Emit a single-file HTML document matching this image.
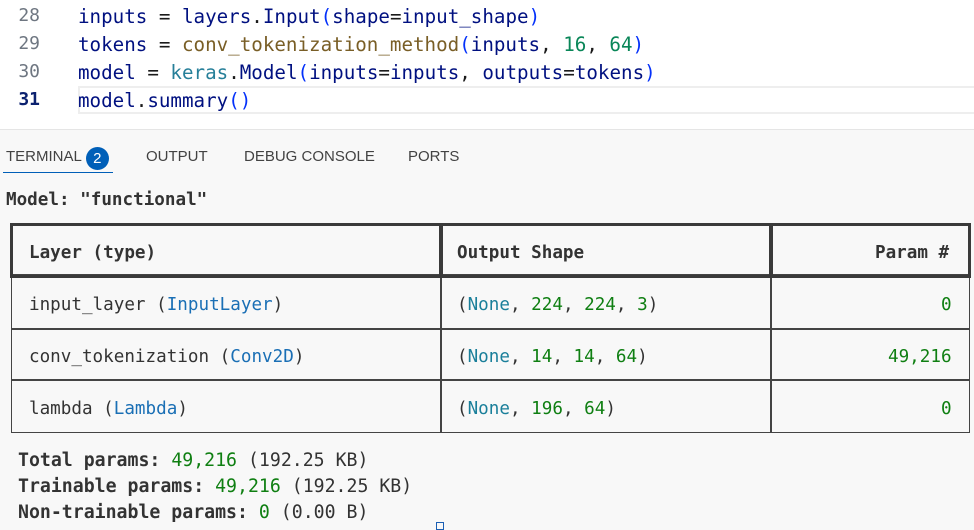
<!DOCTYPE html>
<html><head><meta charset="utf-8"><style>
*{margin:0;padding:0;box-sizing:border-box}
body{width:974px;height:528px;overflow:hidden;background:#f8f8f8;position:relative;font-family:"DejaVu Sans Mono","Liberation Mono",monospace}
.ed{position:absolute;left:0;top:0;width:974px;height:130px;background:#fff;border-bottom:1px solid #e5e5e5}
.ln{position:absolute;left:0;width:40px;text-align:right;font-size:18px;color:#6e7681}
.code{position:absolute;left:78px;font-size:19.2px;color:#1a1a1a;white-space:pre;letter-spacing:0}
.hl{position:absolute;left:78px;top:86px;right:0;height:28px;border:2px solid #eee;border-right:none}
.v{color:#001080}.f{color:#795e26}.t{color:#267f99}.n{color:#098658}.p{color:#0431fa}
.tab{position:absolute;top:148px;font-family:"Liberation Sans",sans-serif;font-size:15px;color:#424242}
.badge{display:inline-block;width:23px;height:23px;border-radius:50%;background:#005fb8;color:#fff;font-size:15px;text-align:center;line-height:23px;margin-left:4px;vertical-align:-2px}
.ul{position:absolute;left:3px;top:172px;width:110px;height:1px;background:#005fb8}
.txt{position:absolute;white-space:pre;font-size:17.6px;color:#333}
.tot{font-size:18.2px}
b{font-weight:bold}
.g{color:#0f7f12}.b{color:#1a6fb5}.c{color:#1a7f9a}
.cell{position:absolute;border:1.5px solid #444}
.hd{position:absolute;border:3.5px solid #3a3a3a}
</style></head><body>
<div class="ed">
<div class="hl"></div>
<div class="ln" style="top:5px">28</div>
<div class="ln" style="top:33px">29</div>
<div class="ln" style="top:61px">30</div>
<div class="ln" style="top:89px;color:#0b216f;font-weight:bold">31</div>
<div class="code" style="top:5px"><span class="v">inputs</span> = <span class="v">layers</span>.<span class="v">Input</span><span class="p">(</span><span class="v">shape</span>=<span class="v">input_shape</span><span class="p">)</span></div>
<div class="code" style="top:33px"><span class="v">tokens</span> = <span class="f">conv_tokenization_method</span><span class="p">(</span><span class="v">inputs</span>, <span class="n">16</span>, <span class="n">64</span><span class="p">)</span></div>
<div class="code" style="top:61px"><span class="v">model</span> = <span class="t">keras</span>.<span class="v">Model</span><span class="p">(</span><span class="v">inputs</span>=<span class="v">inputs</span>, <span class="v">outputs</span>=<span class="v">tokens</span><span class="p">)</span></div>
<div class="code" style="top:89px"><span class="v">model</span>.<span class="v">summary</span><span class="p">()</span></div>
</div>
<div class="tab" style="left:6px;top:147px">TERMINAL<span class="badge">2</span></div>
<div class="tab" style="left:146px">OUTPUT</div>
<div class="tab" style="left:244px">DEBUG CONSOLE</div>
<div class="tab" style="left:408px">PORTS</div>
<div class="ul"></div>
<div class="txt" style="left:6px;top:190px"><b>Model: "functional"</b></div>

<div class="cell" style="left:11px;top:274px;width:431px;height:56px"></div>
<div class="cell" style="left:440px;top:274px;width:332px;height:56px"></div>
<div class="cell" style="left:770px;top:274px;width:200px;height:56px"></div>
<div class="cell" style="left:11px;top:328px;width:431px;height:53px"></div>
<div class="cell" style="left:440px;top:328px;width:332px;height:53px"></div>
<div class="cell" style="left:770px;top:328px;width:200px;height:53px"></div>
<div class="cell" style="left:11px;top:379px;width:431px;height:54px"></div>
<div class="cell" style="left:440px;top:379px;width:332px;height:54px"></div>
<div class="cell" style="left:770px;top:379px;width:200px;height:54px"></div>
<div class="hd" style="left:10px;top:223px;width:433px;height:55px"></div>
<div class="hd" style="left:439px;top:223px;width:334px;height:55px"></div>
<div class="hd" style="left:769px;top:223px;width:202px;height:55px"></div>

<div class="txt" style="left:29px;top:243px"><b>Layer (type)</b></div>
<div class="txt" style="left:457px;top:243px"><b>Output Shape</b></div>
<div class="txt" style="left:875px;top:243px"><b>Param #</b></div>
<div class="txt" style="left:29px;top:295px">input_layer (<span class="b">InputLayer</span>)</div>
<div class="txt" style="left:457px;top:295px">(<span class="c">None</span>, <span class="g">224</span>, <span class="g">224</span>, <span class="g">3</span>)</div>
<div class="txt" style="left:941px;top:295px"><span class="g">0</span></div>
<div class="txt" style="left:29px;top:347px">conv_tokenization (<span class="b">Conv2D</span>)</div>
<div class="txt" style="left:457px;top:347px">(<span class="c">None</span>, <span class="g">14</span>, <span class="g">14</span>, <span class="g">64</span>)</div>
<div class="txt" style="left:888px;top:347px"><span class="g">49,216</span></div>
<div class="txt" style="left:29px;top:399px">lambda (<span class="b">Lambda</span>)</div>
<div class="txt" style="left:457px;top:399px">(<span class="c">None</span>, <span class="g">196</span>, <span class="g">64</span>)</div>
<div class="txt" style="left:941px;top:399px"><span class="g">0</span></div>

<div class="txt tot" style="left:18px;top:450px"><b>Total params:</b> <span class="g">49,216</span> (192.25 KB)</div>
<div class="txt tot" style="left:18px;top:476px"><b>Trainable params:</b> <span class="g">49,216</span> (192.25 KB)</div>
<div class="txt tot" style="left:18px;top:502px"><b>Non-trainable params:</b> <span class="g">0</span> (0.00 B)</div>
<div style="position:absolute;left:436px;top:522px;width:8px;height:8px;border:1.5px solid #1a5fb4"></div>
</body></html>
